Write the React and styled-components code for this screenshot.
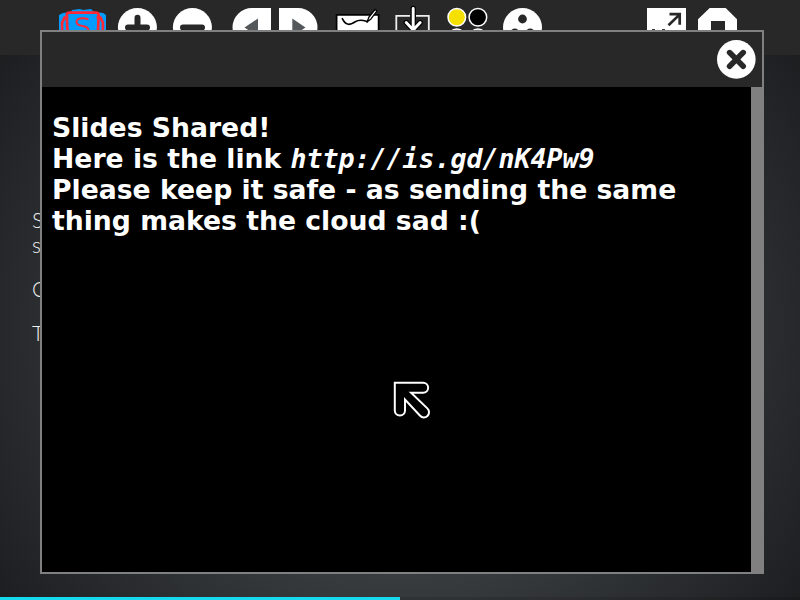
import React from "react";
import styled, { createGlobalStyle } from "styled-components";

const GlobalStyle = createGlobalStyle`
  * { box-sizing: border-box; }
  body { margin: 0; background: #1c1e20; overflow: hidden; }
`;

const Screen = styled.div`
  position: relative;
  display: flex;
  flex-direction: column;
  width: 800px;
  height: 600px;
  overflow: hidden;
  background: #1c1e20;
`;

const Toolbar = styled.header`
  display: flex;
  align-items: flex-start;
  flex: 0 0 55px;
  padding-left: 58px;
  background: #282828;
`;

const Icon = styled.svg`
  display: block;
  flex: none;
  width: ${(p) => p.$width}px;
  height: 55px;
  margin-left: ${(p) => p.$gap || 0}px;
`;

const Stage = styled.div`
  display: flex;
  flex-direction: column;
  flex: 1;
  background: radial-gradient(circle farthest-corner at center, #555a5f 0%, #1c1e20 100%);
`;

const Slide = styled.main`
  flex: 1;
  padding: 153px 0 0 32px;
  color: #eee;
  font: 300 21px/24.5px Lato, sans-serif;
`;

const SlideLine = styled.p`
  margin: 0 0 ${(p) => p.$after}px;
`;

const Progress = styled.div`
  flex: 0 0 3px;
  background: linear-gradient(#17d9ee, #17d9ee) 0 0 / 50% 100% no-repeat rgba(0, 0, 0, 0.1);
`;

const Dialog = styled.section`
  position: absolute;
  left: 40px;
  top: 30px;
  display: flex;
  flex-direction: column;
  width: 724px;
  height: 544px;
  border: 2px solid #808080;
  background: #000;
`;

const DialogHeader = styled.div`
  display: flex;
  justify-content: flex-end;
  flex: 0 0 55px;
  padding: 7px 6px 0 0;
  background: #282828;
`;

const CloseButton = styled.button`
  display: block;
  width: 40px;
  height: 40px;
  padding: 0;
  border: 0;
  background: none;
`;

const DialogBody = styled.div`
  display: flex;
  flex: 1;
`;

const Message = styled.p`
  flex: 1;
  margin: 0;
  padding: 25px 0 0 10px;
  color: #fff;
  font: bold 26.667px/31px "DejaVu Sans", sans-serif;
  white-space: nowrap;
`;

const Link = styled.span`
  font-family: "DejaVu Sans Mono", monospace;
  font-size: 26.58px;
  font-style: italic;
`;

const ScrollTrack = styled.div`
  flex: 0 0 11px;
  background: #808080;
`;

const Pointer = styled.svg`
  position: absolute;
  left: 390px;
  top: 378px;
`;

export default function App() {
  return (
    <Screen>
      <GlobalStyle />
      <Toolbar>
        <Icon $width={49} viewBox="58 0 49 55">
          <path d="M59 40V15l4-2 8-1 1-2 8-1 3 1 8-1 2 2 2 1 8 1 3 2v25z" fill="#009dff" />
          <path d="M62.5 40l-.5-17 2.5-5.5h4M102.5 40l.5-17-2.5-5.5h-4M68 40l-1.3-24.5q0-2.8 3-2.8h26q3 0 3 2.8L97.5 40" fill="none" stroke="#ff2935" strokeWidth="2.7" />
          <path d="M88.5 19.4q-3-1.2-6-1.2-6 0-6 3.8 0 3 6 4 7 1 6 6-1 4-7 4-3 0-6-2" fill="none" stroke="#ff2935" strokeWidth="2" />
        </Icon>
        <Icon $width={40} $gap={10} viewBox="117 0 40 55">
          <circle cx="137.4" cy="27.5" r="19.5" fill="#fff" />
          <path d="M137.5 17.8v20M128 27.5h19" stroke="#282828" strokeWidth="6" strokeLinecap="round" />
        </Icon>
        <Icon $width={40} $gap={15} viewBox="172 0 40 55">
          <circle cx="192.4" cy="27.5" r="19.5" fill="#fff" />
          <path d="M183 27.5h19" stroke="#282828" strokeWidth="6" strokeLinecap="round" />
        </Icon>
        <Icon $width={40} $gap={20} viewBox="232 0 40 55">
          <path d="M271 8v39h-19a19.5 19.5 0 0 1 0-39z" fill="#fff" />
          <path d="M258 18.5v18L244.5 27.5z" fill="#55585b" />
        </Icon>
        <Icon $width={40} $gap={7} viewBox="279 0 40 55">
          <path d="M279 8v39h19a19.5 19.5 0 0 0 0-39z" fill="#fff" />
          <path d="M292.3 18.5v18L305.5 27.5z" fill="#55585b" />
        </Icon>
        <Icon $width={46} $gap={16} viewBox="335 0 46 55">
          <path d="M336.6 14.8h42V42h-42z" fill="#fff" stroke="#000" strokeWidth="1.7" />
          <path d="M342.3 18.7c4 8 8 6 13 3s9-1 12 0" fill="none" stroke="#000" strokeWidth="1.6" strokeLinecap="round" />
          <path d="M367 22l2-5 6-7.5 2 1.4-6 8z" fill="#fff" stroke="#000" strokeWidth="1.3" strokeLinejoin="round" />
        </Icon>
        <Icon $width={38} $gap={13} viewBox="394 0 38 55">
          <path d="M410 15.8h-13.7V40h32.5V15.8H416" fill="none" stroke="#eee" strokeWidth="1.8" />
          <path d="M413.2 8.5v21M406.2 22.5l7 7.5 7-7.5" fill="none" stroke="#000" strokeWidth="5.3" strokeLinecap="round" strokeLinejoin="round" />
          <path d="M413.2 8.5v21M406.2 22.5l7 7.5 7-7.5" fill="none" stroke="#fff" strokeWidth="2.9" strokeLinecap="round" strokeLinejoin="round" />
        </Icon>
        <Icon $width={42} $gap={15} viewBox="447 0 42 55">
          <g stroke="#fff" strokeWidth="1.5">
            <circle cx="456.8" cy="17.2" r="8.8" fill="#f5e000" />
            <circle cx="477.9" cy="17.2" r="8.8" fill="#000" />
            <circle cx="456.8" cy="37.3" r="8.4" fill="#777" />
            <circle cx="477.9" cy="37.3" r="8.4" fill="#777" />
          </g>
        </Icon>
        <Icon $width={40} $gap={14} viewBox="503 0 40 55">
          <circle cx="522.5" cy="27.5" r="19.5" fill="#fff" />
          <circle cx="522.5" cy="19" r="4.4" fill="#282828" />
          <circle cx="514.8" cy="32.9" r="4.4" fill="#282828" />
          <circle cx="530.2" cy="32.9" r="4.4" fill="#282828" />
        </Icon>
        <Icon $width={40} $gap={104} viewBox="647 0 40 55">
          <path d="M647 8h39v39h-39z" fill="#fff" />
          <path d="M668.5 25.2l11-10.6M669.5 14.2h10.2v10.5" fill="none" stroke="#282828" strokeWidth="2.7" />
          <path d="M652 29.6h3m7 0h3" stroke="#282828" strokeWidth="1" />
        </Icon>
        <Icon $width={40} $gap={11} viewBox="698 0 40 55">
          <path d="M709.7 8h16l11.3 11.2v16L725.7 47h-16L698 35.2v-16z" fill="#fff" />
          <path d="M711 21h14v14h-14z" fill="#282828" />
        </Icon>
      </Toolbar>
      <Stage>
        <Slide>
          <SlideLine $after={0}>S</SlideLine>
          <SlideLine $after={19.5}>s</SlideLine>
          <SlideLine $after={19.5}>C</SlideLine>
          <SlideLine $after={0}>T</SlideLine>
        </Slide>
        <Progress />
      </Stage>
      <Dialog>
        <DialogHeader>
          <CloseButton aria-label="Close">
            <svg width="40" height="40" viewBox="0 0 40 40">
              <circle cx="20.3" cy="20.4" r="19.3" fill="#fff" />
              <path d="M13.6 13.6l13.6 13.6M27.2 13.6L13.6 27.2" stroke="#282828" strokeWidth="5.6" strokeLinecap="round" />
            </svg>
          </CloseButton>
        </DialogHeader>
        <DialogBody>
          <Message>
            Slides Shared!<br />
            Here is the link <Link>http://is.gd/nK4Pw9</Link><br />
            Please keep it safe - as sending the same<br />
            thing makes the cloud sad :(
          </Message>
          <ScrollTrack />
        </DialogBody>
      </Dialog>
      <Pointer width="44" height="44" viewBox="390 378 44 44">
        <path
          d="M394.8 382.7h28.3a5 5 0 0 1 0 10.1h-12l16.5 15.8a5 5 0 0 1-7.5 7.2L405 399.5v11a5.1 5.1 0 0 1-10.2 0z"
          fill="#000" stroke="#fff" strokeWidth="2"
        />
      </Pointer>
    </Screen>
  );
}
